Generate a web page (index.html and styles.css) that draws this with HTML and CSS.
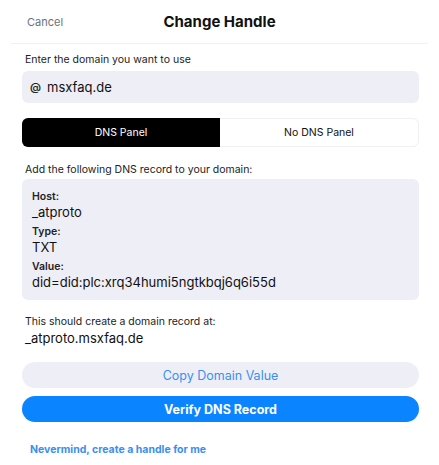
FILE: index.html
```html
<!DOCTYPE html>
<html lang="en">
<head>
  <meta charset="UTF-8">
  <title>Change Handle</title>
  <link rel="stylesheet" href="styles.css">
</head>
<body>
  <div class="header">
    <span class="cancel">Cancel</span>
    <span class="title">Change Handle</span>
    <span class="spacer"></span>
  </div>

  <div class="content">
    <div class="label">Enter the domain you want to use</div>
    <div class="input-box">
      <span class="at">@</span>
      <span class="input-text">msxfaq.de</span>
    </div>

    <div class="segmented">
      <div class="seg active">DNS Panel</div>
      <div class="seg">No DNS Panel</div>
    </div>

    <div class="label add-label">Add the following DNS record to your domain:</div>
    <div class="record">
      <div class="field">
        <div class="field-name">Host:</div>
        <div class="field-value">_atproto</div>
      </div>
      <div class="field">
        <div class="field-name">Type:</div>
        <div class="field-value">TXT</div>
      </div>
      <div class="field">
        <div class="field-name">Value:</div>
        <div class="field-value">did=did:plc:xrq34humi5ngtkbqj6q6i55d</div>
      </div>
    </div>

    <div class="label result-label">This should create a domain record at:</div>
    <div class="result">_atproto.msxfaq.de</div>

    <button class="btn btn-copy">Copy Domain Value</button>
    <button class="btn btn-verify">Verify DNS Record</button>

    <div class="nevermind">Nevermind, create a handle for me</div>
  </div>
</body>
</html>
```

FILE: styles.css
```css
body {
  margin: 0;
  padding: 0;
  font-family: Inter, 'Noto Sans', sans-serif;
  background: #fff;
  color: #111;
}
.header {
  display: flex;
  align-items: center;
  justify-content: space-between;
  height: 43px;
  margin: 0 11px;
  padding: 0 16px;
  border-bottom: 1px solid #f0f1f4;
}
.cancel {
  font-size: 11px;
  color: #6a7280;
  width: 60px;
}
.title {
  font-size: 15px;
  font-weight: 700;
  color: #111;
}
.spacer {
  width: 60px;
}
.content {
  padding: 0 20px 0 22px;
}
.label {
  font-size: 10.5px;
  color: #222;
  padding-left: 3px;
}
.content > .label:first-child {
  margin-top: 9px;
  line-height: 14px;
}
.input-box {
  display: flex;
  align-items: center;
  height: 32px;
  margin-top: 4px;
  padding: 0 8px;
  background: #eeeef6;
  border-radius: 6px;
  font-size: 13px;
  color: #111;
}
.at {
  font-size: 11px;
  font-weight: 600;
  margin-right: 6px;
  color: #222;
}
.segmented {
  display: flex;
  height: 29px;
  margin-top: 15px;
  border: 1px solid #eef0f3;
  border-radius: 6px;
  box-sizing: border-box;
}
.seg {
  flex: 1;
  display: flex;
  align-items: center;
  justify-content: center;
  font-size: 10.5px;
  color: #111;
}
.seg.active {
  background: #000;
  color: #fff;
  border-radius: 6px 0 0 6px;
  margin: -1px 0 -1px -1px;
}
.add-label {
  margin-top: 16px;
  line-height: 14px;
}
.record {
  margin-top: 2px;
  padding: 11px 10px 10px;
  background: #eeeef6;
  border-radius: 6px;
  height: 121px;
  box-sizing: border-box;
}
.field {
  margin-bottom: 5px;
}
.field-name {
  font-size: 10.5px;
  font-weight: 600;
  color: #222;
  line-height: 14px;
}
.field-value {
  font-size: 13px;
  color: #111;
  line-height: 16px;
}
.result-label {
  margin-top: 15px;
  line-height: 14px;
}
.result {
  font-size: 13px;
  color: #111;
  line-height: 18px;
  padding-left: 3px;
}
.btn {
  display: block;
  width: 100%;
  height: 26px;
  border: none;
  border-radius: 13px;
  font-family: Inter, 'Noto Sans', sans-serif;
  font-size: 12.5px;
  cursor: pointer;
}
.btn-copy {
  margin-top: 15px;
  background: #eeeff6;
  color: #3a8ff0;
}
.btn-verify {
  margin-top: 8px;
  background: #0a84ff;
  color: #fff;
  font-weight: 700;
}
.nevermind {
  margin-top: 21px;
  padding-left: 8px;
  font-size: 10.5px;
  font-weight: 700;
  color: #3a8ff0;
}
```
